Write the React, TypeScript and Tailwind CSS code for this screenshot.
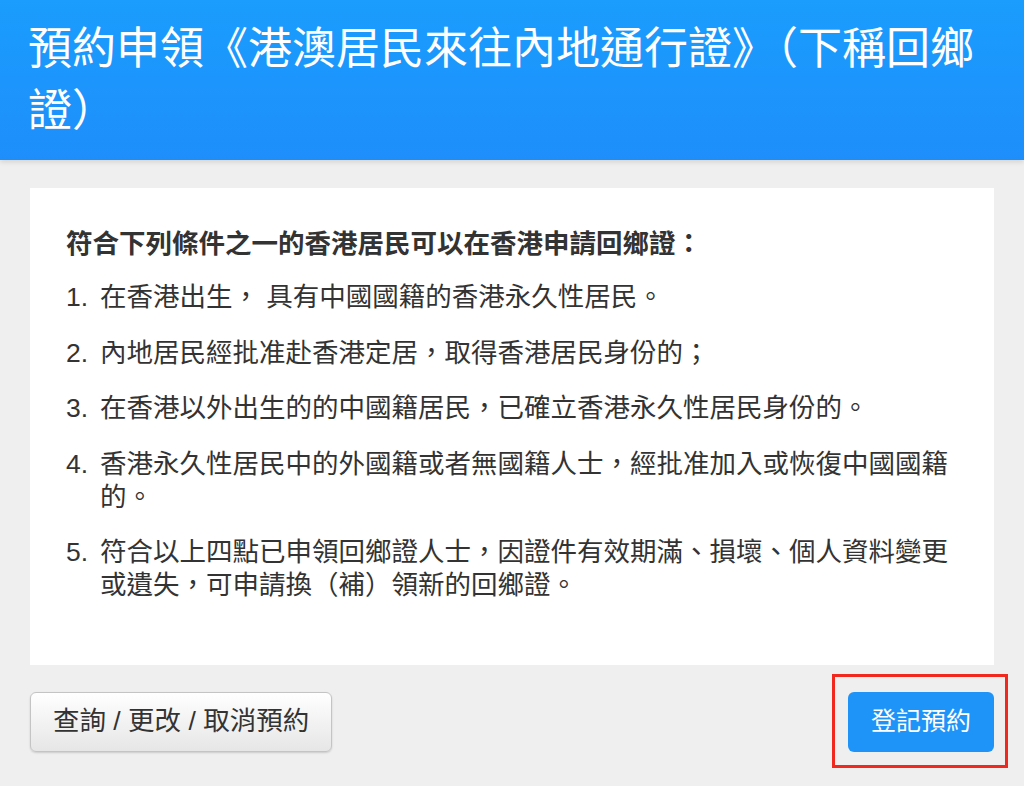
const items = [
  "在香港出生， 具有中國國籍的香港永久性居民。",
  "內地居民經批准赴香港定居，取得香港居民身份的；",
  "在香港以外出生的的中國籍居民，已確立香港永久性居民身份的。",
  "香港永久性居民中的外國籍或者無國籍人士，經批准加入或恢復中國國籍的。",
  "符合以上四點已申領回鄉證人士，因證件有效期滿、損壞、個人資料變更或遺失，可申請換（補）領新的回鄉證。",
];

export default function App() {
  return (
    <div className="min-h-[786px] w-full bg-[#efefef] font-['Liberation_Sans','Noto_Sans_CJK_TC',sans-serif]">
      {/* Header */}
      <header className="relative z-10 bg-gradient-to-b from-[#1a9dfd] to-[#1e8efb] px-[28px] py-[18px] shadow-[0_2px_5px_rgba(0,0,0,0.12)]">
        <h1 className="text-[44px] leading-[62px] font-normal text-white">
          預約申領《港澳居民來往內地通行證》（下稱回鄉證）
        </h1>
      </header>

      <main className="px-[30px] pt-[28px] pb-[34px]">
        {/* Card */}
        <section className="bg-white px-[36px] pt-[40px] pb-[63px] text-[#333333]">
          <p className="text-[26.5px] leading-[33px] font-bold">
            符合下列條件之一的香港居民可以在香港申請回鄉證：
          </p>
          <ol className="mt-[20px] flex flex-col gap-[22.5px]">
            {items.map((t, i) => (
              <li key={i} className="flex text-[26.5px] leading-[33px]">
                <span className="w-[34px] shrink-0">{i + 1}.</span>
                <span className="flex-1">{t}</span>
              </li>
            ))}
          </ol>
        </section>

        {/* Buttons */}
        <div className="mt-[27px] flex items-center justify-between">
          <button className="h-[60px] rounded-[6px] border border-[#c4c4c4] bg-gradient-to-b from-white to-[#e6e6e6] px-[22px] text-[26.5px] text-[#333333] shadow-[0_1px_2px_rgba(0,0,0,0.15)]">
            查詢 / 更改 / 取消預約
          </button>
          <div className="relative">
            <button className="h-[60px] rounded-[6px] bg-[#1e93f8] px-[23px] text-[25px] text-white">
              登記預約
            </button>
            <span className="pointer-events-none absolute -top-[18px] -bottom-[16px] -left-[16px] -right-[14px] border-[3px] border-[#f0281e]" />
          </div>
        </div>
      </main>
    </div>
  );
}
